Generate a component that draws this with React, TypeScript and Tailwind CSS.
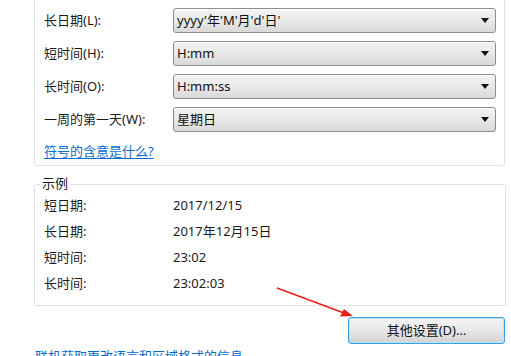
import React from "react"

const FONT = "font-['Segoe_UI','Noto_Sans','Noto_Sans_CJK_SC',sans-serif]"

const FORMAT_ROWS = [
  { label: "长日期(L):", value: "yyyy'年'M'月'd'日'" },
  { label: "短时间(H):", value: "H:mm" },
  { label: "长时间(O):", value: "H:mm:ss" },
  { label: "一周的第一天(W):", value: "星期日" },
]

const SAMPLE_ROWS = [
  { label: "短日期:", value: "2017/12/15" },
  { label: "长日期:", value: "2017年12月15日" },
  { label: "短时间:", value: "23:02" },
  { label: "长时间:", value: "23:02:03" },
]

function FakeSelect({ value }: { value: string }) {
  return (
    <div className="flex h-[25px] w-[323px] items-center justify-between rounded-[3px] border border-[#8d8d8d] bg-gradient-to-b from-[#f3f3f3] via-[#e9e9e9] to-[#d9d9d9] pl-[3px] pr-[6px] shadow-[inset_0_1px_0_#ffffff]">
      <span className="text-[13px] leading-none text-[#111]">{value}</span>
      <svg width="8" height="5" viewBox="0 0 8 5">
        <path d="M0 0h8L4 5z" fill="#111" />
      </svg>
    </div>
  )
}

export default function App() {
  return (
    <div className={`relative h-[356px] w-[511px] overflow-hidden bg-white text-[#1a1a1a] ${FONT}`}>
      {/* format group, top edge scrolled off */}
      <div className="ml-[34px] mt-[-5px] h-[171px] w-[471px] rounded-[3px] border border-[#dbe3e8]">
        <div className="flex flex-col gap-[8px] pl-[9px] pt-[12px]">
          {FORMAT_ROWS.map((row) => (
            <div key={row.label} className="flex items-center">
              <span className="w-[129px] text-[13px] leading-none">{row.label}</span>
              <FakeSelect value={row.value} />
            </div>
          ))}
          <a className="mt-[2px] w-fit text-[13px] leading-[18px] text-[#0a6ccf] underline underline-offset-2">
            符号的含意是什么?
          </a>
        </div>
      </div>

      {/* sample group */}
      <div className="relative ml-[34px] mt-[18px] h-[122px] w-[472px] rounded-[3px] border border-[#dbe3e8]">
        <span className="absolute left-[5px] top-[-10px] bg-white px-[2px] text-[13px] leading-[16px]">
          示例
        </span>
        <div className="flex flex-col gap-[10px] pl-[9px] pt-[12px]">
          {SAMPLE_ROWS.map((row) => (
            <div key={row.label} className="flex h-[16px] items-center text-[13px] leading-none">
              <span className="w-[129px]">{row.label}</span>
              <span>{row.value}</span>
            </div>
          ))}
        </div>
      </div>

      <div className="mt-[11px] flex justify-end pr-[6px]">
        <button
          type="button"
          className="h-[27px] w-[157px] rounded-[3px] border border-[#3a9fe0] bg-gradient-to-b from-[#f5f5f5] via-[#e8e8e8] to-[#d2d2d2] text-[13px] leading-none text-[#111] shadow-[inset_0_0_0_1px_#b9e3fb]"
        >
          其他设置(D)...
        </button>
      </div>

      <a className="absolute left-[35px] top-[347px] text-[13px] leading-[18px] text-[#0a6ccf]">
        联机获取更改语言和区域格式的信息
      </a>

      {/* annotation arrow */}
      <svg className="absolute left-0 top-0" width="511" height="356" viewBox="0 0 511 356">
        <line x1="277" y1="288" x2="344" y2="313" stroke="#e8201c" strokeWidth="1.6" />
        <path d="M353 316 L340 316.5 L344 309 Z" fill="#e8201c" />
      </svg>
    </div>
  )
}
